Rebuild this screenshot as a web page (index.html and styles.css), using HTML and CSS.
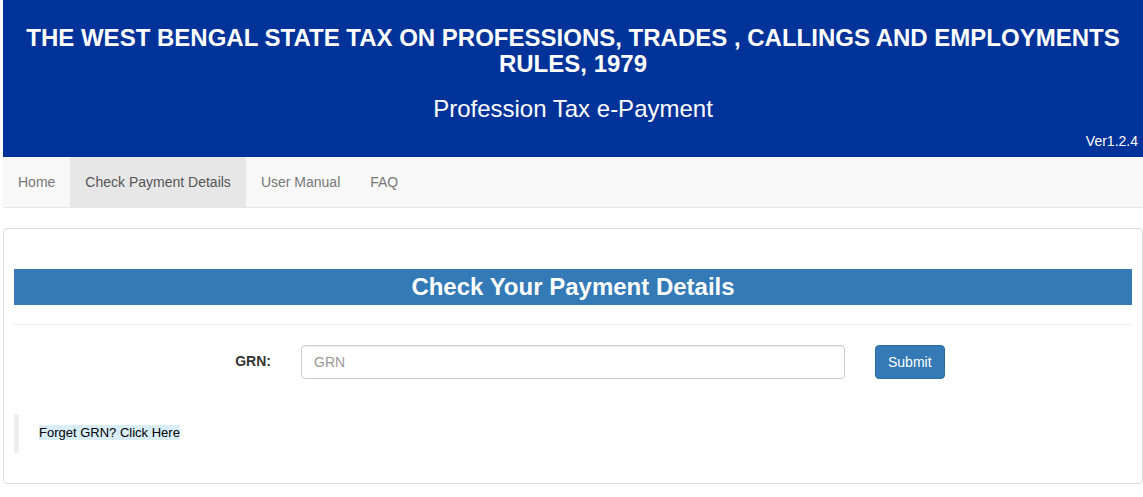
FILE: index.html
```html
<!DOCTYPE html>
<html lang="en">
<head>
    <meta charset="UTF-8">
    <meta name="viewport" content="width=device-width, initial-scale=1.0">
    <title>Profession Tax e-Payment</title>
    <link rel="stylesheet" href="styles.css">
</head>
<body>

    <!--=============== HEADER ===============-->
    <header class="site-header">
        <h1 class="site-title">THE WEST BENGAL STATE TAX ON PROFESSIONS, TRADES , CALLINGS AND EMPLOYMENTS RULES, 1979</h1>
        <h2 class="site-subtitle">Profession Tax e-Payment</h2>
        <div class="version">Ver1.2.4</div>
    </header>

    <!--=============== NAV ===============-->
    <nav class="navbar">
        <ul class="nav-links">
            <li><a href="#">Home</a></li>
            <li class="active"><a href="#">Check Payment Details</a></li>
            <li><a href="#">User Manual</a></li>
            <li><a href="#">FAQ</a></li>
        </ul>
    </nav>

    <!--=============== CHECK PAYMENT ===============-->
    <div class="panel">
        <h3 class="panel-title">Check Your Payment Details</h3>
        <hr class="divider">

        <form class="grn-form" onsubmit="return false;">
            <div class="col col-label">
                <label for="grn">GRN:</label>
            </div>
            <div class="col col-input">
                <input type="text" id="grn" class="form-control" placeholder="GRN">
            </div>
            <div class="col col-button">
                <button type="submit" class="btn-submit">Submit</button>
            </div>
        </form>

        <blockquote class="note">
            <span class="note-link">Forget GRN? Click Here</span>
        </blockquote>
    </div>

</body>
</html>
```

FILE: styles.css
```css
* {
    box-sizing: border-box;
}
body {
    font-family: "Liberation Sans", Arial, sans-serif;
    font-size: 14px;
    line-height: 1.42857;
    color: #333;
    margin: 0 0 0 3px;
    background-color: #fff;
}

/* Blue title band */
.site-header {
    background-color: #003399;
    color: #fff;
    text-align: center;
    padding: 25px 5px 6px 5px;
    height: 157px;
}
.site-title {
    font-size: 24px;
    line-height: 26.4px;
    font-weight: bold;
    margin: 0 10px;
}
.site-subtitle {
    font-size: 24px;
    line-height: 28px;
    font-weight: normal;
    margin: 17px 0 0 0;
}
.version {
    text-align: right;
    font-size: 14px;
    line-height: 20px;
    margin-top: 8px;
}

/* Menu bar */
.navbar {
    background-color: #f8f8f8;
    border-bottom: 1px solid #e7e7e7;
    margin-bottom: 20px;
}
.nav-links {
    list-style: none;
    margin: 0;
    padding: 0;
    display: flex;
}
.nav-links a {
    display: block;
    padding: 15px;
    line-height: 20px;
    color: #777;
    text-decoration: none;
}
.nav-links .active a {
    background-color: #e7e7e7;
    color: #555;
}

/* Main box */
.panel {
    border: 1px solid #ddd;
    border-radius: 4px;
    padding: 10px;
}
.panel-title {
    background-color: #337ab7;
    color: #fff;
    text-align: center;
    font-size: 24px;
    line-height: 36px;
    font-weight: bold;
    margin: 30px 0 0 0;
}
.divider {
    border: 0;
    border-top: 1px solid #eee;
    margin: 19px 0 20px 0;
}

/* GRN row: 3 / 6 / 3 columns */
.grn-form {
    display: flex;
    margin: 0 -15px 35px -15px;
}
.col {
    padding: 0 15px;
}
.col-label {
    width: 25%;
    text-align: right;
    padding-top: 7px;
}
.col-label label {
    font-weight: bold;
}
.col-input {
    width: 50%;
}
.col-button {
    width: 25%;
}
.form-control {
    display: block;
    width: 100%;
    height: 34px;
    padding: 6px 12px;
    font-family: inherit;
    font-size: 14px;
    color: #555;
    border: 1px solid #ccc;
    border-radius: 4px;
    box-shadow: inset 0 1px 1px rgba(0, 0, 0, 0.075);
}
.form-control::placeholder {
    color: #999;
}
.btn-submit {
    height: 34px;
    padding: 6px 12px;
    font-family: inherit;
    font-size: 14px;
    color: #fff;
    background-color: #337ab7;
    border: 1px solid #2e6da4;
    border-radius: 4px;
}

/* Hint below the form */
.note {
    margin: 0 0 20px 0;
    padding: 10px 20px;
    border-left: 5px solid #eee;
    font-size: 13px;
}
.note-link {
    background-color: #d9edf7;
    color: #000;
}
```
